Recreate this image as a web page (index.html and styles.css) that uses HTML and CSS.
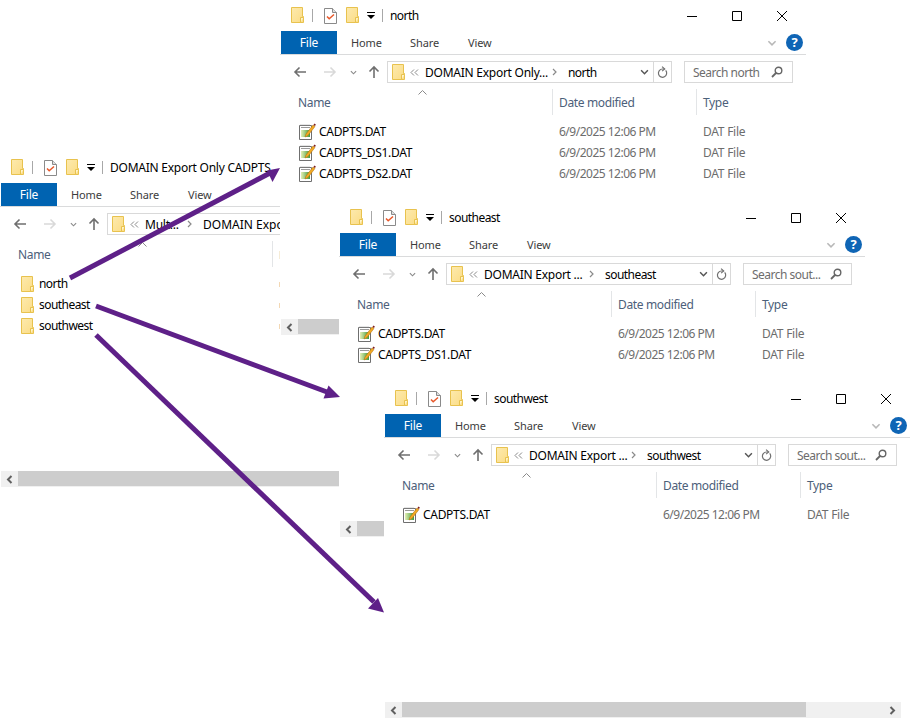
FILE: index.html
```html
<!DOCTYPE html>
<html lang="en">
<head>
<meta charset="utf-8">
<title>Explorer windows</title>
<link rel="stylesheet" href="styles.css">
</head>
<body>
<svg class="defs" width="0" height="0" aria-hidden="true">
  <defs>
    <linearGradient id="fg" x1="0" y1="0" x2="1" y2="1"><stop offset="0" stop-color="#fdeaae"/><stop offset="1" stop-color="#fbdc85"/></linearGradient>
    <linearGradient id="gg" x1="0" y1="0" x2="1" y2="0"><stop offset="0" stop-color="#e4efb4"/><stop offset="1" stop-color="#3f9a3c"/></linearGradient>
    <symbol id="folder" viewBox="0 0 13 16"><path d="M.5.5h11v9h1v6H.5z" fill="url(#fg)" stroke="#e8c24e"/><path d="M9.500 15.500v-5h3" fill="#fff3c8" stroke="#e8c24e"/></symbol>
    <symbol id="doc" viewBox="0 0 13 16"><path d="M.5.5h8l4 4v11H.5z" fill="#fff" stroke="#8a8a8a"/><path d="M8.500.5v4h4" fill="#ddd" stroke="#8a8a8a"/><path d="M3 8.500l2.200 2.300L10 6.500" fill="none" stroke="#e8582a" stroke-width="1.500"/></symbol>
    <symbol id="dat" viewBox="0 0 17 17"><path d="M.5 2.500h12v14H.500z" fill="#fff" stroke="#6f6f6f"/><path d="M2 1.500v1M4 1.500v1M6 1.500v1M8 1.500v1M10 1.500v1M2 4.500h9" stroke="#9a9a9a"/><rect x="2" y="7" width="9" height="7" fill="url(#gg)"/><path d="M6 14l1-3 7-9 2 1.500-7 9z" fill="#f2a922" stroke="#a86a10" stroke-width=".5"/><path d="M14.500 2l1-1.500 1.300 1-.8 1.500z" fill="#7d1a1a"/></symbol>
    <symbol id="back" viewBox="0 0 14 12"><path d="M13 6H2M6.500 1.500L2 6l4.500 4.500" fill="none" stroke="currentColor" stroke-width="1.600"/></symbol>
    <symbol id="up" viewBox="0 0 12 14"><path d="M6 13V2M1.500 6.500L6 2l4.500 4.500" fill="none" stroke="currentColor" stroke-width="1.600"/></symbol>
    <symbol id="chev" viewBox="0 0 8 5"><path d="M1 1l3 3 3-3" fill="none" stroke="currentColor" stroke-width="1.300"/></symbol>
    <symbol id="crumb" viewBox="0 0 5 8"><path d="M1 1l3 3-3 3" fill="none" stroke="currentColor" stroke-width="1.200"/></symbol>
    <symbol id="dbl" viewBox="0 0 9 7"><path d="M4 .5L1 3.500l3 3M8 .5L5 3.500l3 3" fill="none" stroke="currentColor"/></symbol>
    <symbol id="refresh" viewBox="0 0 12 14"><path d="M9.500 4.800A4.500 4.500 0 1 1 6 3.200H8" fill="none" stroke="currentColor" stroke-width="1.300"/><path d="M5.500.5L8.500 3.200 5.500 5.500" fill="none" stroke="currentColor" stroke-width="1.200"/></symbol>
    <symbol id="search" viewBox="0 0 12 12"><circle cx="7.500" cy="4.500" r="3.300" fill="none" stroke="currentColor" stroke-width="1.400"/><path d="M5 7l-4 4" stroke="currentColor" stroke-width="1.800"/></symbol>
    <symbol id="qat" viewBox="0 0 8 7"><path d="M0 .5h8" stroke="#000"/><path d="M0 3h8L4 7z" fill="#000"/></symbol>
    <symbol id="min" viewBox="0 0 10 10"><path d="M0 5.500h10" stroke="#000"/></symbol>
    <symbol id="max" viewBox="0 0 10 10"><path d="M.5.500h9v9h-9z" fill="none" stroke="#000"/></symbol>
    <symbol id="close" viewBox="0 0 10 10"><path d="M0 0l10 10M10 0L0 10" stroke="#000"/></symbol>
    <symbol id="sl" viewBox="0 0 7 9"><path d="M5.500 1L2 4.500 5.500 8" fill="none" stroke="#606060" stroke-width="2"/></symbol>
    <symbol id="sr" viewBox="0 0 7 9"><path d="M1.500 1L5 4.500 1.500 8" fill="none" stroke="#606060" stroke-width="2"/></symbol>
    <symbol id="sort" viewBox="0 0 9 5"><path d="M.5 4.500l4-4 4 4" fill="none" stroke="#8a8a8a"/></symbol>
  </defs>
</svg>

<main class="desk">
  <section class="win win-left">
    <header class="title">
      <svg class="i-folder"><use href="#folder"/></svg><span class="qsep"></span>
      <svg class="i-doc"><use href="#doc"/></svg><svg class="i-folder2"><use href="#folder"/></svg>
      <svg class="i-qat"><use href="#qat"/></svg><span class="qsep qsep2"></span>
      <span class="title-text">DOMAIN Export Only CADPTS</span>
    </header>
    <nav class="ribbon">
      <span class="tab-file">File</span><span class="tab tab-home">Home</span><span class="tab tab-share">Share</span><span class="tab tab-view">View</span>
    </nav>
    <div class="bar">
      <svg class="i-back"><use href="#back"/></svg><svg class="i-fwd"><use href="#back"/></svg><svg class="i-down"><use href="#chev"/></svg><svg class="i-up"><use href="#up"/></svg>
      <div class="addr">
        <svg class="i-folder-a"><use href="#folder"/></svg><svg class="i-dbl"><use href="#dbl"/></svg>
        <span class="crumb crumb-left1">Mult...</span><svg class="i-crumb"><use href="#crumb"/></svg><span class="crumb-end">DOMAIN Expo</span>
      </div>
    </div>
    <svg class="i-sort"><use href="#sort"/></svg>
    <div class="cols"><span class="c-name">Name</span><span class="c-date"><i class="tick tick-head"></i></span></div>
    <div class="list">
      <div class="row"><span class="n lc"><svg class="i-lf"><use href="#folder"/></svg>north</span><i class="tick"></i></div>
      <div class="row"><span class="n lc"><svg class="i-lf"><use href="#folder"/></svg>southeast</span><i class="tick"></i></div>
      <div class="row"><span class="n lc"><svg class="i-lf"><use href="#folder"/></svg>southwest</span><i class="tick"></i></div>
    </div>
    <div class="hscroll"><span class="sbtn"><svg class="i-s"><use href="#sl"/></svg></span><span class="thumb"></span><span class="strack"></span><span class="sbtn"><svg class="i-s"><use href="#sr"/></svg></span></div>
  </section>

  <section class="win win-north">
    <header class="title">
      <svg class="i-folder"><use href="#folder"/></svg><span class="qsep"></span>
      <svg class="i-doc"><use href="#doc"/></svg><svg class="i-folder2"><use href="#folder"/></svg>
      <svg class="i-qat"><use href="#qat"/></svg><span class="qsep qsep2"></span>
      <span class="title-text lc">north</span>
      <span class="caps"><svg class="i-cap"><use href="#min"/></svg><svg class="i-cap"><use href="#max"/></svg><svg class="i-cap"><use href="#close"/></svg></span>
    </header>
    <nav class="ribbon">
      <span class="tab-file">File</span><span class="tab tab-home">Home</span><span class="tab tab-share">Share</span><span class="tab tab-view">View</span>
      <svg class="i-rchev"><use href="#chev"/></svg><span class="help">?</span>
    </nav>
    <div class="bar">
      <svg class="i-back"><use href="#back"/></svg><svg class="i-fwd"><use href="#back"/></svg><svg class="i-down"><use href="#chev"/></svg><svg class="i-up"><use href="#up"/></svg>
      <div class="addr">
        <svg class="i-folder-a"><use href="#folder"/></svg><svg class="i-dbl"><use href="#dbl"/></svg>
        <span class="crumb crumb-north">DOMAIN Export Only...</span><svg class="i-crumb"><use href="#crumb"/></svg><span class="crumb-end lc">north</span>
        <svg class="i-achev"><use href="#chev"/></svg><span class="refresh"><svg class="i-refresh"><use href="#refresh"/></svg></span>
      </div>
      <div class="search"><span>Search north</span><svg class="i-search"><use href="#search"/></svg></div>
    </div>
    <svg class="i-sort"><use href="#sort"/></svg>
    <div class="cols"><span class="c-name">Name</span><span class="c-date">Date modified</span><span class="c-type">Type</span></div>
    <div class="list">
      <div class="row"><span class="n"><svg class="i-dat"><use href="#dat"/></svg>CADPTS.DAT</span><span class="d">6/9/2025 12:06 PM</span><span class="t">DAT File</span></div>
      <div class="row"><span class="n"><svg class="i-dat"><use href="#dat"/></svg>CADPTS_DS1.DAT</span><span class="d">6/9/2025 12:06 PM</span><span class="t">DAT File</span></div>
      <div class="row"><span class="n"><svg class="i-dat"><use href="#dat"/></svg>CADPTS_DS2.DAT</span><span class="d">6/9/2025 12:06 PM</span><span class="t">DAT File</span></div>
    </div>
    <div class="hscroll"><span class="sbtn"><svg class="i-s"><use href="#sl"/></svg></span><span class="thumb"></span><span class="strack"></span><span class="sbtn"><svg class="i-s"><use href="#sr"/></svg></span></div>
  </section>

  <section class="win win-se">
    <header class="title">
      <svg class="i-folder"><use href="#folder"/></svg><span class="qsep"></span>
      <svg class="i-doc"><use href="#doc"/></svg><svg class="i-folder2"><use href="#folder"/></svg>
      <svg class="i-qat"><use href="#qat"/></svg><span class="qsep qsep2"></span>
      <span class="title-text lc">southeast</span>
      <span class="caps"><svg class="i-cap"><use href="#min"/></svg><svg class="i-cap"><use href="#max"/></svg><svg class="i-cap"><use href="#close"/></svg></span>
    </header>
    <nav class="ribbon">
      <span class="tab-file">File</span><span class="tab tab-home">Home</span><span class="tab tab-share">Share</span><span class="tab tab-view">View</span>
      <svg class="i-rchev"><use href="#chev"/></svg><span class="help">?</span>
    </nav>
    <div class="bar">
      <svg class="i-back"><use href="#back"/></svg><svg class="i-fwd"><use href="#back"/></svg><svg class="i-down"><use href="#chev"/></svg><svg class="i-up"><use href="#up"/></svg>
      <div class="addr">
        <svg class="i-folder-a"><use href="#folder"/></svg><svg class="i-dbl"><use href="#dbl"/></svg>
        <span class="crumb crumb-se">DOMAIN Export ...</span><svg class="i-crumb"><use href="#crumb"/></svg><span class="crumb-end lc">southeast</span>
        <svg class="i-achev"><use href="#chev"/></svg><span class="refresh"><svg class="i-refresh"><use href="#refresh"/></svg></span>
      </div>
      <div class="search"><span>Search sout...</span><svg class="i-search"><use href="#search"/></svg></div>
    </div>
    <svg class="i-sort"><use href="#sort"/></svg>
    <div class="cols"><span class="c-name">Name</span><span class="c-date">Date modified</span><span class="c-type">Type</span></div>
    <div class="list">
      <div class="row"><span class="n"><svg class="i-dat"><use href="#dat"/></svg>CADPTS.DAT</span><span class="d">6/9/2025 12:06 PM</span><span class="t">DAT File</span></div>
      <div class="row"><span class="n"><svg class="i-dat"><use href="#dat"/></svg>CADPTS_DS1.DAT</span><span class="d">6/9/2025 12:06 PM</span><span class="t">DAT File</span></div>
    </div>
    <div class="hscroll"><span class="sbtn"><svg class="i-s"><use href="#sl"/></svg></span><span class="thumb"></span><span class="strack"></span><span class="sbtn"><svg class="i-s"><use href="#sr"/></svg></span></div>
  </section>

  <section class="win win-sw">
    <header class="title">
      <svg class="i-folder"><use href="#folder"/></svg><span class="qsep"></span>
      <svg class="i-doc"><use href="#doc"/></svg><svg class="i-folder2"><use href="#folder"/></svg>
      <svg class="i-qat"><use href="#qat"/></svg><span class="qsep qsep2"></span>
      <span class="title-text lc">southwest</span>
      <span class="caps"><svg class="i-cap"><use href="#min"/></svg><svg class="i-cap"><use href="#max"/></svg><svg class="i-cap"><use href="#close"/></svg></span>
    </header>
    <nav class="ribbon">
      <span class="tab-file">File</span><span class="tab tab-home">Home</span><span class="tab tab-share">Share</span><span class="tab tab-view">View</span>
      <svg class="i-rchev"><use href="#chev"/></svg><span class="help">?</span>
    </nav>
    <div class="bar">
      <svg class="i-back"><use href="#back"/></svg><svg class="i-fwd"><use href="#back"/></svg><svg class="i-down"><use href="#chev"/></svg><svg class="i-up"><use href="#up"/></svg>
      <div class="addr">
        <svg class="i-folder-a"><use href="#folder"/></svg><svg class="i-dbl"><use href="#dbl"/></svg>
        <span class="crumb crumb-sw">DOMAIN Export ...</span><svg class="i-crumb"><use href="#crumb"/></svg><span class="crumb-end lc">southwest</span>
        <svg class="i-achev"><use href="#chev"/></svg><span class="refresh"><svg class="i-refresh"><use href="#refresh"/></svg></span>
      </div>
      <div class="search"><span>Search sout...</span><svg class="i-search"><use href="#search"/></svg></div>
    </div>
    <svg class="i-sort"><use href="#sort"/></svg>
    <div class="cols"><span class="c-name">Name</span><span class="c-date">Date modified</span><span class="c-type">Type</span></div>
    <div class="list">
      <div class="row"><span class="n"><svg class="i-dat"><use href="#dat"/></svg>CADPTS.DAT</span><span class="d">6/9/2025 12:06 PM</span><span class="t">DAT File</span></div>
    </div>
    <div class="hscroll"><span class="sbtn"><svg class="i-s"><use href="#sl"/></svg></span><span class="thumb"></span><span class="strack"></span><span class="sbtn"><svg class="i-s"><use href="#sr"/></svg></span></div>
  </section>

  <svg class="arrows" viewBox="0 0 910 719" aria-hidden="true">
    <path class="shaft" d="M70 278L272 172"/><path class="head" d="M280 168L267 170.500L272.500 182z"/>
    <path class="shaft" d="M96 306L327 392"/><path class="head" d="M340 397L323.500 398.500L328.500 385.500z"/>
    <path class="shaft" d="M96 335L374 602"/><path class="head" d="M384 612.500L378 598L368 608.500z"/>
  </svg>
</main>
</body>
</html>
```

FILE: styles.css
```css
* { box-sizing: border-box; }
html, body { margin: 0; padding: 0; background: #fff; }
body { font-family: "Noto Sans", "Open Sans", sans-serif; font-size: 12px; color: #000; overflow: hidden; }
svg { display: block; flex: none; }
.defs { position: absolute; }
.desk { position: relative; width: 910px; height: 719px; overflow: hidden; }

/* Free-canvas windows */
.win { position: absolute; width: 526px; height: 336px; background: #fff; display: flex; flex-direction: column; overflow: hidden; }
.win-left { left: 0; top: 152px; }
.win-north { left: 280px; top: 0; }
.win-se { left: 339px; top: 202px; }
.win-sw { left: 384px; top: 383px; }

.title { height: 31px; display: flex; align-items: center; padding-left: 11px; }
.i-folder, .i-folder2 { width: 13px; height: 16px; }
.i-folder { margin-top: -1px; }
.i-folder2 { margin-left: 9px; margin-top: -1px; }
.qsep { width: 1px; height: 13px; background: #a8a8a8; margin-left: 8px; }
.qsep2 { margin-left: 7px; }
.i-doc { width: 13px; height: 16px; margin-left: 11px; }
.i-qat { width: 8px; height: 7px; margin-left: 8px; }
.title-text { margin-left: 7px; white-space: nowrap; letter-spacing: -.25px; }
.caps { margin-left: auto; display: flex; gap: 35px; padding-right: 19px; }
.i-cap { width: 10px; height: 10px; }
.lc { letter-spacing: -.55px; }

.ribbon { height: 24px; border-bottom: 1px solid #dadbdc; display: flex; align-items: center; }
.tab-file { margin-left: 1px; width: 56px; height: 23px; background: #0063b1; color: #fff; display: flex; align-items: center; justify-content: center; letter-spacing: -.2px; }
.tab { color: #3c3c3c; font-size: 11px; letter-spacing: -.1px; }
.tab-home { margin-left: 14px; width: 59px; }
.tab-share { width: 58px; }
.tab-view { width: 60px; }
.i-rchev { width: 10px; height: 6px; margin-left: 239px; color: #b8b8b8; }
.help { width: 17px; height: 17px; margin-left: 9px; border-radius: 50%; background: #0f65b5; color: #fff; font-weight: 700; font-size: 13px; line-height: 17px; text-align: center; }

.bar { height: 22px; margin-top: 6px; display: flex; align-items: center; padding-left: 13px; }
.i-back { width: 14px; height: 12px; color: #6f6f6f; }
.i-fwd { width: 14px; height: 12px; margin-left: 16px; color: #d9d9d9; transform: scaleX(-1); }
.i-down { width: 7px; height: 5px; margin-left: 13px; color: #8a8a8a; }
.i-up { width: 12px; height: 14px; margin-left: 11px; color: #6f6f6f; }
.addr { width: 285px; height: 22px; margin-left: 7px; border: 1px solid #d9d9d9; display: flex; align-items: center; padding-left: 4px; }
.i-folder-a { width: 13px; height: 16px; }
.i-dbl { width: 9px; height: 7px; margin-left: 5px; color: #8a8a8a; }
.crumb { margin-left: 6px; white-space: nowrap; overflow: hidden; letter-spacing: -.25px; }
.crumb-north { width: 127px; }
.crumb-se { width: 105px; }
.crumb-sw { width: 102px; }
.crumb-left1 { width: 42px; }
.i-crumb { width: 5px; height: 8px; color: #8a8a8a; }
.crumb-end { margin-left: 11px; white-space: nowrap; overflow: hidden; flex: 1; min-width: 0; }
.i-achev { width: 9px; height: 6px; margin-right: 4px; color: #555; }
.refresh { width: 18px; height: 20px; border-left: 1px solid #d9d9d9; display: flex; align-items: center; justify-content: center; }
.i-refresh { width: 11px; height: 13px; color: #6f6f6f; }
.search { width: 109px; height: 22px; margin-left: 12px; border: 1px solid #d9d9d9; display: flex; align-items: center; justify-content: space-between; padding: 0 9px 0 8px; color: #6d6d6d; white-space: nowrap; }
.search span { letter-spacing: -.5px; }
.i-search { width: 12px; height: 12px; color: #666; }

.i-sort { position: absolute; left: 138px; top: 90px; width: 9px; height: 5px; }
.cols { display: grid; grid-template-columns: 272px 144px 1fr; height: 26px; margin-top: 6px; align-items: stretch; color: #4c607a; letter-spacing: -.35px; }
.cols span { display: flex; align-items: center; white-space: nowrap; overflow: hidden; }
.cols .c-name { padding-left: 18px; }
.cols .c-date, .cols .c-type { border-left: 1px solid #e3e5e7; padding-left: 6px; }

.list { flex: 1; padding-top: 6px; }
.row { display: grid; grid-template-columns: 272px 144px 1fr; height: 21px; align-items: center; white-space: nowrap; }
.n { display: flex; align-items: center; padding-left: 19px; }
.n:not(.lc) { letter-spacing: -.3px; }
.d { padding-left: 7px; color: #6d6d6d; letter-spacing: -.5px; overflow: hidden; }
.t { padding-left: 7px; color: #6d6d6d; letter-spacing: -.25px; }
.i-dat { width: 17px; height: 17px; margin-right: 3px; }
.i-lf { width: 13px; height: 16px; margin: 0 5px 0 2px; }

/* Left window: only a sliver of the date column shows beside the next window */
.tick { display: block; width: 1px; height: 5px; margin-left: 7px; margin-top: 1px; background: #f3d8b4; }
.tick-head { height: 8px; margin-left: 0; background: #f6ecd6; }

.hscroll { margin: 0 9px 1px 1px; height: 16px; display: flex; background: #f0f0f0; flex: none; }
.sbtn { width: 17px; display: flex; align-items: center; justify-content: center; flex: none; }
.thumb { width: 404px; height: 15px; background: #cdcdcd; flex: none; }
.strack { flex: 1; }
.i-s { width: 7px; height: 9px; }

.arrows { position: absolute; left: 0; top: 0; width: 910px; height: 719px; pointer-events: none; }
.shaft { fill: none; stroke: #5e2088; stroke-width: 5; }
.head { fill: #5e2088; }
```
